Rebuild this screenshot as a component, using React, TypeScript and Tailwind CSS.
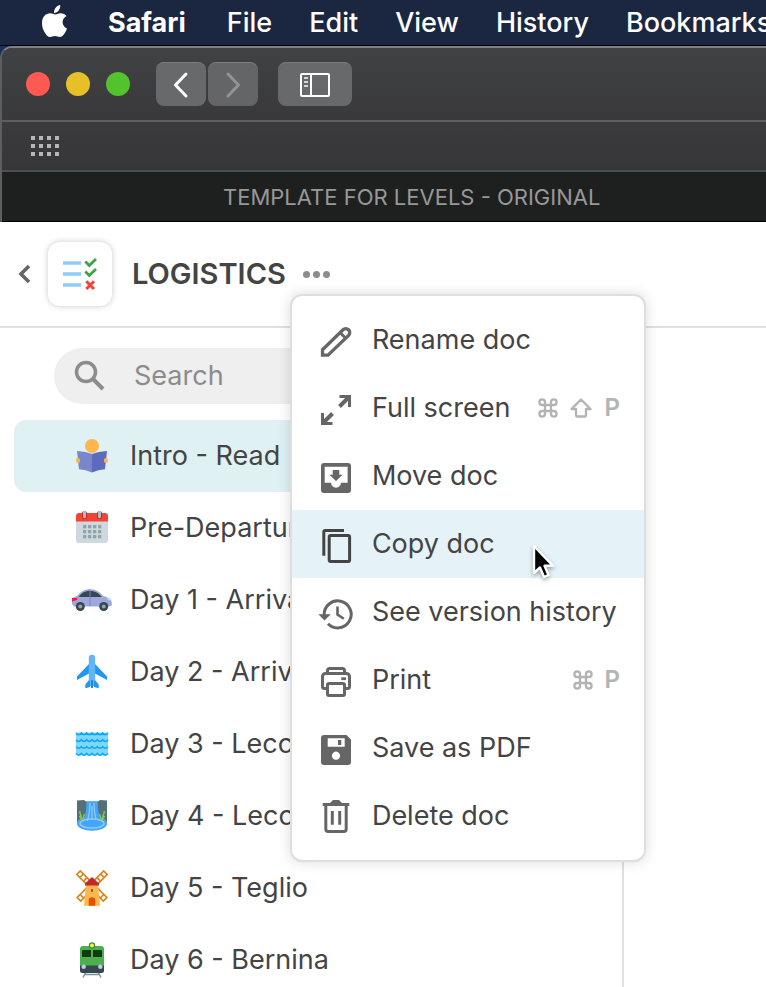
import type { ReactNode } from "react";

const menuBarItems = ["File", "Edit", "View", "History", "Bookmarks"];

function AppleLogo() {
  return (
    <svg width="28" height="36" viewBox="0 0 28 36" fill="#fff" aria-hidden="true">
      <path d="M19.200 2c.3 2.300-.5 4.300-1.700 5.700-1.200 1.400-2.800 2.300-4.500 2.200-.2-2.100.7-4.200 1.900-5.500C16.100 3.100 17.800 2.200 19.200 2z" />
      <path d="M25.500 12.900c-2.600 1.600-4 3.700-3.900 6.300.1 3 1.700 5.100 4.400 6.300-.8 2.400-2 4.700-3.600 6.600-1.100 1.300-2.200 1.900-3.700 1.900-1.700 0-2.500-1-4.700-1s-3.100 1-4.700 1c-1.500 0-2.700-.8-3.800-2.100C2.600 28.700 1 24.700 1 20.300c0-6.200 3.600-10 8.200-10 2 0 3.600 1.200 4.900 1.200 1.200 0 3.100-1.300 5.400-1.300 2.400 0 4.600 1 6 2.700z" />
    </svg>
  );
}

function CommandKey() {
  return (
    <svg width="20" height="20" viewBox="0 0 20 20" fill="none" stroke="#b3b3b3" strokeWidth="2.300" aria-label="Command">
      <path d="M7 7V4.200A2.800 2.800 0 1 0 4.200 7H15.800A2.800 2.800 0 1 0 13 4.200V15.800A2.800 2.800 0 1 0 15.800 13H4.200A2.800 2.800 0 1 0 7 15.800Z" />
    </svg>
  );
}

function ShiftKey() {
  return (
    <svg width="24" height="20" viewBox="0 0 24 20" fill="none" stroke="#b3b3b3" strokeWidth="2.300" strokeLinejoin="round" aria-label="Shift">
      <path d="M12 1.500 21.500 11H17V17.500a1 1 0 0 1-1 1H8a1 1 0 0 1-1-1V11H2.500Z" />
    </svg>
  );
}

function MenuIcon({ children, dark }: { children: ReactNode; dark?: boolean }) {
  return (
    <svg
      width="36"
      height="40"
      viewBox="0 0 36 40"
      className={dark ? "shrink-0 text-[#444444]" : "shrink-0 text-[#666666]"}
      fill="none"
      stroke="currentColor"
      strokeWidth="3"
      aria-hidden="true"
    >
      {children}
    </svg>
  );
}

type MenuEntry = { label: string; icon: ReactNode; keys?: ReactNode; active?: boolean };

const menuEntries: MenuEntry[] = [
  {
    label: "Rename doc",
    icon: (
      <>
        <path d="M4.500 35.200V29.800L25 9.800a4 4 0 0 1 5.600 0 4 4 0 0 1 0 5.600L10 35.200Z" strokeWidth="3.300" />
        <path d="M22 12.500 28 18.500" />
      </>
    ),
  },
  {
    label: "Full screen",
    icon: (
      <>
        <path d="M21.500 8.500H31.500V19M4.500 25V35.500H14.500" />
        <path d="M31 9 21.500 18.500M5 35 14.500 25.500" strokeWidth="4" />
      </>
    ),
    keys: (
      <>
        <CommandKey />
        <ShiftKey />
        <span>P</span>
      </>
    ),
  },
  {
    label: "Move doc",
    icon: (
      <>
        <path
          stroke="none"
          fill="currentColor"
          fillRule="evenodd"
          d="M6 7H30a3 3 0 0 1 3 3V34a3 3 0 0 1-3 3H6a3 3 0 0 1-3-3V10a3 3 0 0 1 3-3ZM6.700 10.700V26.700H13a5 5 0 0 0 10 0H29.600V10.700Z"
        />
        <path stroke="none" fill="currentColor" d="M14.700 14H21.300V18.800H24.500L18 25 11.500 18.800H14.700Z" />
      </>
    ),
  },
  {
    label: "Copy doc",
    active: true,
    icon: (
      <>
        <rect x="11.200" y="11.500" width="20.400" height="26" rx="1.500" />
        <path d="M5.800 31.700V8a1.500 1.500 0 0 1 1.500-1.500H26" />
      </>
    ),
  },
  {
    label: "See version history",
    icon: (
      <>
        <path d="M6.200 23A13.500 13.500 0 1 1 10 31.800" />
        <path d="M.3 22.200H12.800L6.500 28.500Z" fill="currentColor" stroke="none" />
        <path d="M19.500 14.500V22.500L25.800 26.800" strokeWidth="2.600" />
      </>
    ),
  },
  {
    label: "Print",
    icon: (
      <>
        <path d="M9.500 13V10.500a2 2 0 0 1 2-2H24.500a2 2 0 0 1 2 2V13" />
        <path d="M9 28.500H6.500a2 2 0 0 1-2-2V16.500a3 3 0 0 1 3-3H28.500a3 3 0 0 1 3 3V26.500a2 2 0 0 1-2 2H27" />
        <rect x="9.500" y="23.500" width="17" height="12" rx="1.500" />
        <path d="M23.300 18.700H28" strokeWidth="2.800" />
      </>
    ),
    keys: (
      <>
        <CommandKey />
        <span>P</span>
      </>
    ),
  },
  {
    label: "Save as PDF",
    icon: (
      <path
        stroke="none"
        fill="currentColor"
        fillRule="evenodd"
        d="M6 7H28.500L33 11.500V34a3 3 0 0 1-3 3H6a3 3 0 0 1-3-3V10a3 3 0 0 1 3-3ZM9.700 10.200V18.700H26.700V10.200ZM20 12H23.300V17H20ZM18 23.600a4.100 4.100 0 1 0 .01 0Z"
      />
    ),
  },
  {
    label: "Delete doc",
    icon: (
      <>
        <path d="M4.700 8.500H31.300" />
        <path d="M12.500 8.500V6.500L15 4H21L23.500 6.500V8.500Z" fill="currentColor" stroke="none" />
        <path d="M7.800 9V33a2.500 2.500 0 0 0 2.500 2.500H25.700a2.500 2.500 0 0 0 2.500-2.500V9" />
        <path d="M14.300 15V28.700M21.700 15V28.700" />
      </>
    ),
  },
];

function PageIcon({ children }: { children: ReactNode }) {
  return (
    <svg width="40" height="40" viewBox="0 0 40 40" className="shrink-0" aria-hidden="true">
      {children}
    </svg>
  );
}

const calendarColumns = [11, 16, 21, 26];
const calendarRows = [17, 22, 27];
const waveRows = [9, 15.8, 22.6, 29.4];

type Page = { title: string; icon: ReactNode; active?: boolean };

const pages: Page[] = [
  {
    title: "Intro - Read",
    active: true,
    icon: (
      <>
        <circle cx="20" cy="10" r="7" fill="#ffb74d" />
        <path d="M5 15Q14 15.500 20 18V36.500Q14 33.500 7 33.300Z" fill="#7986cb" />
        <path d="M35 15Q26 15.500 20 18V36.500Q26 33.500 33 33.300Z" fill="#5c6bc0" />
        <rect x="4" y="22" width="4" height="5" rx="2" fill="#ffb74d" />
        <rect x="32" y="22" width="4" height="5" rx="2" fill="#ffb74d" />
      </>
    ),
  },
  {
    title: "Pre-Departure",
    icon: (
      <>
        <path d="M4 12H36V32a3 3 0 0 1-3 3H7a3 3 0 0 1-3-3Z" fill="#cfd8dc" />
        <path d="M4 13.500V8a3 3 0 0 1 3-3H33a3 3 0 0 1 3 3V13.500Z" fill="#f44336" />
        <path d="M12.500 5.500V8.500M27.500 5.500V8.500" stroke="#c62828" strokeWidth="5" strokeLinecap="round" />
        <path d="M12.500 4.200V8.800M27.500 4.200V8.800" stroke="#b0bec5" strokeWidth="3" strokeLinecap="round" />
        {calendarRows.map((y) =>
          calendarColumns.map((x) => <rect key={`${x}-${y}`} x={x} y={y} width="3.300" height="3.300" fill="#90a4ae" />),
        )}
      </>
    ),
  },
  {
    title: "Day 1 - Arrival",
    icon: (
      <>
        <path d="M0 18 5 16Q10 9.500 17 9 26 9 31 16 38 17 39.500 21.500L40 25Q39 26.500 36 26.500H2L0 24Z" fill="#9fa8da" />
        <path d="M6.500 17Q11 10.700 17.500 10.700 25 10.700 29.800 17Z" fill="#37474f" />
        <path d="M18 10.500V26" stroke="#7986cb" strokeWidth="1" />
        <path d="M0 18H5.500L5 20 0 21.500Z" fill="#ff1744" />
        <path d="M34.500 17Q38.500 17.500 39.500 20.500L36 20Z" fill="#bbdefb" />
        <circle cx="8.300" cy="26.500" r="4.500" fill="#37474f" />
        <circle cx="8.300" cy="26.500" r="2" fill="#90a4ae" />
        <circle cx="31.700" cy="26.500" r="4.500" fill="#37474f" />
        <circle cx="31.700" cy="26.500" r="2" fill="#90a4ae" />
      </>
    ),
  },
  {
    title: "Day 2 - Arrival",
    icon: (
      <>
        <path d="M17 12 5 24.500V28L17 21.500ZM23 12 35 24.500V28L23 21.500Z" fill="#2196f3" />
        <path d="M16.800 6a3.200 3.200 0 0 1 6.400 0V34H16.800Z" fill="#64b5f6" />
        <path d="M17 28 13.300 32.500V36.300L18 35V30ZM23 28 26.700 32.500V36.300L22 35V30Z" fill="#2196f3" />
        <path d="M20 28V36" stroke="#1e88e5" strokeWidth="2" />
      </>
    ),
  },
  {
    title: "Day 3 - Lecco",
    icon: (
      <>
        <path d="M4 8.500H36V30L34 31.500H6L4 30Z" fill="#81d4fa" />
        {waveRows.map((y) => (
          <path
            key={y}
            transform={`translate(0 ${y})`}
            d="M4 0Q6.700 3.500 9.300 0 12 3.500 14.700 0 17.300 3.500 20 0 22.700 3.500 25.300 0 28 3.500 30.700 0 33.300 3.500 36 0"
            fill="none"
            stroke="#03a9f4"
            strokeWidth="1.500"
          />
        ))}
      </>
    ),
  },
  {
    title: "Day 4 - Lecco",
    icon: (
      <>
        <path d="M5 4.500 12 4 14 5.500H26L28 4 35 4.500V26H5Z" fill="#546e7a" />
        <path d="M14.500 5.500H25.700Q26 17 29 26H11Q14.500 17 14.500 5.500Z" fill="#42a5f5" />
        <ellipse cx="20" cy="27.500" rx="15" ry="7.300" fill="#42a5f5" />
        <path d="M18 7Q18 16 15.500 25M22 7Q22 16 24 24M20 10V24" fill="none" stroke="#90caf9" strokeWidth="1.300" />
        <ellipse cx="20" cy="27.500" rx="12" ry="4.500" fill="none" stroke="#90caf9" strokeWidth="1.500" />
        <path d="M7.500 15 10 24 7.500 20M12.500 18 10.500 24M32.500 15 30 24M27.500 18 29.500 24M32.500 20 30 24" fill="none" stroke="#8bc34a" strokeWidth="1.500" />
      </>
    ),
  },
  {
    title: "Day 5 - Teglio",
    icon: (
      <>
        <g fill="none" stroke="#d98219" strokeWidth="1.700">
          <path d="M4.800 6.500 8.300 3 34.800 29.500 31.300 33Z" />
          <path d="M35.200 6.500 31.700 3 5.200 29.500 8.700 33Z" />
          <path d="M7.800 9.500 11.300 6M11.500 13.200 15 9.700M32.200 9.500 28.700 6M28.500 13.200 25 9.700M8.300 26.500 11.700 30M31.700 26.500 28.300 30" />
        </g>
        <path d="M14 16H26L28 37.700H12Z" fill="#ffb74d" />
        <path d="M13 17.500V15.500L20 9 27 15.500V17.500Z" fill="#c62828" />
        <path d="M16.700 37.700V32.500a3.300 3.300 0 0 1 6.600 0V37.700Z" fill="#e65100" />
        <rect x="19" y="21" width="2" height="3" rx="1" fill="#795548" />
      </>
    ),
  },
  {
    title: "Day 6 - Bernina",
    icon: (
      <>
        <path d="M14 32 11 37.500M26 32 29 37.500M13 34.500H27" stroke="#78909c" strokeWidth="1.500" />
        <path d="M8 27V9a3 3 0 0 1 3-3H29a3 3 0 0 1 3 3V27Z" fill="#4caf50" />
        <path d="M8 25.500H32V30.500a2.500 2.500 0 0 1-2.500 2.500H10.500a2.500 2.500 0 0 1-2.500-2.500Z" fill="#37474f" />
        <path d="M10 11a1 1 0 0 1 1-1H19V17H10ZM21 10H29a1 1 0 0 1 1 1V17H21Z" fill="#0d3d0f" />
        <circle cx="20" cy="5.500" r="3.200" fill="#388e3c" />
        <circle cx="20" cy="5.500" r="2" fill="#ffeb3b" />
        <circle cx="11.700" cy="26.700" r="2.200" fill="#c5cae9" />
        <circle cx="28.300" cy="26.700" r="2.200" fill="#c5cae9" />
      </>
    ),
  },
];

function MenuBar() {
  return (
    <nav
      aria-label="System menu"
      className="flex h-[46px] shrink-0 items-center gap-[37px] overflow-hidden border-b border-black bg-[#1b2641] pl-[41px] text-[27px] font-medium leading-8 whitespace-nowrap text-white"
    >
      <div className="flex shrink-0 items-center gap-[39px] pr-1">
        <button type="button" aria-label="Apple" className="-mt-1">
          <AppleLogo />
        </button>
        <button type="button" className="font-bold">
          Safari
        </button>
      </div>
      {menuBarItems.map((item) => (
        <button key={item} type="button" className="shrink-0">
          {item}
        </button>
      ))}
    </nav>
  );
}

function BrowserChrome() {
  return (
    <div className="shrink-0 bg-[#1b2f5c]">
      <div className="overflow-hidden rounded-tl-xl border-t-2 border-l-2 border-t-[#808182] border-l-[#5d5e5f] bg-[#1e1f1f]">
        <div className="flex h-[74px] items-center border-b-2 border-[#5d5e60] bg-linear-to-b from-[#414243] to-[#39393b] pl-6">
          <div className="flex gap-4">
            <button type="button" aria-label="Close window" className="size-6 rounded-full bg-[#ff5a52]" />
            <button type="button" aria-label="Minimise window" className="size-6 rounded-full bg-[#e6c029]" />
            <button type="button" aria-label="Zoom window" className="size-6 rounded-full bg-[#53c22c]" />
          </div>
          <div className="ml-[26px] flex gap-[2px]">
            <button
              type="button"
              aria-label="Back"
              className="flex h-11 w-[50px] items-center justify-center rounded-lg border-t border-[#7b7c7e] bg-[#68696b]"
            >
              <svg width="20" height="28" viewBox="0 0 20 28" fill="none" stroke="#fff" strokeWidth="3" strokeLinecap="round" strokeLinejoin="round">
                <path d="M15 3 4.500 14 15 25" />
              </svg>
            </button>
            <button
              type="button"
              aria-label="Forward"
              className="flex h-11 w-[50px] items-center justify-center rounded-lg border-t border-[#7b7c7e] bg-[#646567]"
            >
              <svg width="20" height="28" viewBox="0 0 20 28" fill="none" stroke="#929395" strokeWidth="3" strokeLinecap="round" strokeLinejoin="round">
                <path d="M5 3 15.500 14 5 25" />
              </svg>
            </button>
          </div>
          <button
            type="button"
            aria-label="Show sidebar"
            className="ml-5 flex h-11 w-[74px] items-center justify-center rounded-lg border-t border-[#7b7c7e] bg-[#68696b]"
          >
            <svg width="30" height="24" viewBox="0 0 30 24" fill="none" stroke="#fff" strokeWidth="2">
              <rect x="1" y="1" width="28" height="22" rx="1" />
              <path d="M11 1V23" />
              <path d="M4 5H8M4 9H8M4 13H8" stroke="#d5d5d6" />
            </svg>
          </button>
        </div>
        <div className="flex h-[50px] items-center border-b-2 border-[#4c4f52] bg-linear-to-b from-[#3b3b3d] to-[#363638] pl-[29px]">
          <button type="button" aria-label="Favourites" className="grid grid-cols-4 gap-1">
            {Array.from({ length: 12 }, (_, i) => (
              <span key={i} className="size-1 bg-[#b7b7b8]" />
            ))}
          </button>
        </div>
        <div className="flex h-[50px] items-center border-b border-black pl-[221px] text-[22px] leading-7 whitespace-nowrap text-[#97989a]">
          TEMPLATE FOR LEVELS - ORIGINAL
        </div>
      </div>
    </div>
  );
}

function Cursor() {
  return (
    <svg
      width="26"
      height="38"
      viewBox="0 0 26 38"
      className="pointer-events-none absolute top-[34px] left-[240px] drop-shadow-[0_2px_2px_rgba(0,0,0,0.35)]"
      aria-hidden="true"
    >
      <path
        d="M2 2V29L8 23.500 12 33 16.500 31 12.500 21.800H21Z"
        fill="#000"
        stroke="#fff"
        strokeWidth="2.400"
        strokeLinejoin="round"
      />
    </svg>
  );
}

function DocMenu() {
  return (
    <div
      role="menu"
      aria-label="Doc options"
      className="absolute top-full left-[-13px] z-10 mt-1 w-[356px] rounded-xl border-2 border-[#dedede] bg-white py-[10px] shadow-[0_0_14px_rgba(0,0,0,0.14)]"
    >
      {menuEntries.map((entry) => (
        <button
          key={entry.label}
          type="button"
          role="menuitem"
          className={
            "relative flex h-[68px] w-full items-center pr-6 pl-[26px] text-left text-[27px] leading-9 whitespace-nowrap text-[#444444] " +
            (entry.active ? "z-10 bg-[#e5f3f8]" : "bg-white")
          }
        >
          <MenuIcon dark={entry.active}>{entry.icon}</MenuIcon>
          <span className="ml-[18px]">{entry.label}</span>
          {entry.keys && (
            <span className="ml-auto flex items-center gap-[11px] text-2xl font-semibold text-[#b3b3b3]">{entry.keys}</span>
          )}
          {entry.active && <Cursor />}
        </button>
      ))}
    </div>
  );
}

function DocHeader() {
  return (
    <header className="flex h-[106px] shrink-0 items-center border-b-2 border-[#e0e0e0] bg-white pl-4">
      <button type="button" aria-label="Back" className="flex h-10 w-4 items-center justify-center">
        <svg width="16" height="24" viewBox="0 0 16 24" fill="none" stroke="#666" strokeWidth="3.600">
          <path d="M13 4 5 12 13 20" />
        </svg>
      </button>
      <div className="ml-4 flex size-16 shrink-0 items-center justify-center rounded-xl bg-white shadow-[0_0_6px_rgba(0,0,0,0.22)]">
        <svg width="64" height="64" viewBox="0 0 64 64" fill="none" aria-hidden="true">
          <path d="M15 21H33M15 32H33M15 43H33" stroke="#90caf9" strokeWidth="3.400" />
          <path d="M37.300 19.500 41.300 23.500 48 17M37.300 29.500 41.300 33.500 48 27" stroke="#43a047" strokeWidth="2.800" />
          <path d="M38.300 39.300 46 47M46 39.300 38.300 47" stroke="#f44336" strokeWidth="3" />
        </svg>
      </div>
      <h1 className="ml-5 text-[29px] leading-10 font-semibold text-[#444444]">LOGISTICS</h1>
      <div className="relative ml-[17px]">
        <button type="button" aria-label="Doc options" aria-haspopup="menu" className="flex h-8 items-center gap-[3px]">
          <span className="size-[7px] rounded-full bg-[#8c8c8c]" />
          <span className="size-[7px] rounded-full bg-[#8c8c8c]" />
          <span className="size-[7px] rounded-full bg-[#8c8c8c]" />
        </button>
        <DocMenu />
      </div>
    </header>
  );
}

function Sidebar() {
  return (
    <aside className="w-[624px] max-w-full border-r-2 border-[#e0e0e0] px-[14px] pt-5">
      <label className="ml-10 flex h-14 items-center rounded-full bg-[#efefef] pl-5">
        <svg width="32" height="32" viewBox="0 0 32 32" fill="none" stroke="#8c8c8c" aria-hidden="true">
          <circle cx="12" cy="12" r="9.500" strokeWidth="3.500" />
          <path d="M19 19 29 29" strokeWidth="4" />
        </svg>
        <input
          type="search"
          aria-label="Search"
          placeholder="Search"
          className="ml-7 min-w-0 flex-1 bg-transparent text-[27px] leading-9 outline-none placeholder:text-[#8c8c8c]"
        />
      </label>
      <ul className="mt-4">
        {pages.map((page) => (
          <li key={page.title}>
            <a
              href="#page"
              className={
                "flex h-[72px] items-center rounded-xl pl-[58px] text-[27px] leading-9 whitespace-nowrap text-[#444444] " +
                (page.active ? "bg-[#dff1f3]" : "")
              }
            >
              <PageIcon>{page.icon}</PageIcon>
              <span className="ml-[18px]">{page.title}</span>
            </a>
          </li>
        ))}
      </ul>
    </aside>
  );
}

export default function App() {
  return (
    <div className="flex h-screen flex-col overflow-hidden bg-white font-['Inter','Liberation_Sans',sans-serif]">
      <MenuBar />
      <BrowserChrome />
      <main className="flex min-h-0 flex-1 flex-col">
        <DocHeader />
        <div className="flex flex-1">
          <Sidebar />
        </div>
      </main>
    </div>
  );
}
